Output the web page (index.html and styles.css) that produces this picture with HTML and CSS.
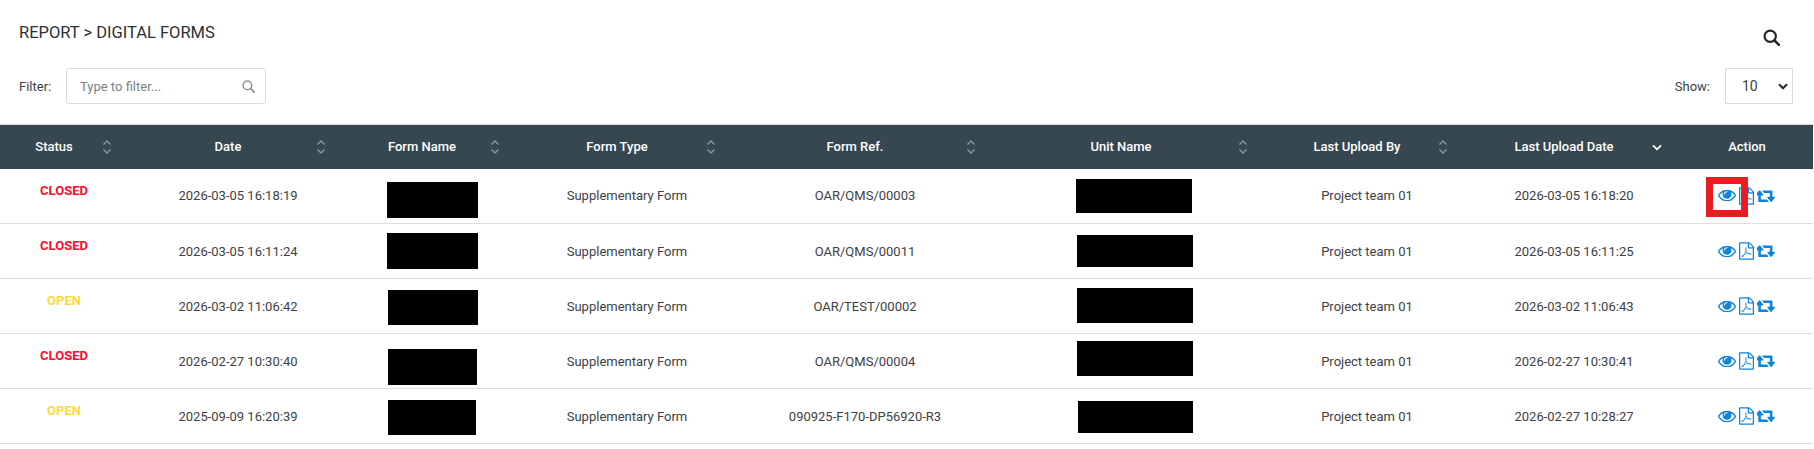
FILE: index.html
```html
<!DOCTYPE html>
<html lang="en">
<head>
<meta charset="utf-8">
<title>Digital Forms</title>
<link rel="stylesheet" href="styles.css">
</head>
<body>
<svg class="defs" aria-hidden="true">
  <defs>
    <symbol id="i-sort" viewBox="0 0 10 16"><path d="M1.500 5.500 5 2l3.500 3.500M1.500 10.500 5 14l3.500-3.500" fill="none" stroke="currentColor" stroke-width="1.400"/></symbol>
    <symbol id="i-eye" viewBox="0 448 1792 1024"><path fill="currentColor" d="M1664 960q-152-236-381-353 61 104 61 225 0 185-131.500 316.500t-316.500 131.500-316.500-131.500-131.500-316.500q0-121 61-225-229 117-381 353 133 205 333.500 326.500t434.500 121.500 434.500-121.500 333.500-326.500zm-720-384q0-20-14-34t-34-14q-125 0-214.500 89.500t-89.500 214.500q0 20 14 34t34 14 34-14 14-34q0-86 61-147t147-61q20 0 34-14t14-34zm848 384q0 34-20 69-140 230-376.500 368.500t-499.500 138.500-499.500-139-376.500-368q-20-35-20-69t20-69q140-229 376.500-368t499.500-139 499.500 139 376.500 368q20 35 20 69z"/></symbol>
    <symbol id="i-pdf" viewBox="128 0 1536 1792"><path fill="currentColor" d="M1596 380q28 28 48 76t20 88v1152q0 40-28 68t-68 28h-1344q-40 0-68-28t-28-68v-1600q0-40 28-68t68-28h896q40 0 88 20t76 48zm-444-244v376h376q-10-29-22-41l-313-313q-12-12-41-22zm384 1528v-1024h-416q-40 0-68-28t-28-68v-416h-768v1536h1280zm-514-593q33 26 84 56 59-7 117-7 147 0 177 49 16 22 2 52 0 1-1 2l-2 2v1q-6 38-71 38-48 0-115-20t-130-53q-221 24-392 83-153 262-242 262-15 0-28-7l-24-12q-1-1-6-5-10-10-6-36 9-40 56-91.500t132-96.500q14-9 23 6 2 2 2 4 52-85 107-197 68-136 104-262-24-82-30.500-159.500t6.500-127.500q11-40 42-40h22q23 0 35 15 18 21 9 68-2 6-4 8 1 3 1 8v30q-2 123-14 192 55 164 146 238zm-576 411q52-24 137-158-51 40-87.500 84t-49.500 74zm398-920q-15 42-2 132 1-7 7-44 0-3 7-43 1-4 4-8-1-1-1-2-1-2-1-3-1-22-13-36 0 1-1 2v2zm-124 661q135-54 284-81-2-1-13-9.500t-16-13.500q-76-67-127-176-27 86-83 197-30 56-45 83zm646-16q-24-24-140-24 76 28 124 28 14 0 18-1 0-1-2-3z"/></symbol>
    <symbol id="i-retweet" viewBox="64 304 1792 1184"><path fill="currentColor" d="M1216 1456q0 13-9.500 22.500t-22.500 9.500h-960q-8 0-13.500-2t-9-7-5.500-8-3-11.500-1-11.500v-600h-192q-26 0-45-19t-19-45q0-24 15-41l320-384q19-22 49-22t49 22l320 384q15 17 15 41 0 26-19 45t-45 19h-192v384h576q16 0 25 11l160 192q7 10 7 21zm640-416q0 24-15 41l-320 384q-20 23-49 23t-49-23l-320-384q-15-17-15-41 0-26 19-45t45-19h192v-384h-576q-16 0-25-12l-160-192q-7-9-7-20 0-13 9.500-22.500t22.500-9.500h960q8 0 13.500 2t9 7 5.500 8 3 11.500 1 11.500v600h192q26 0 45 19t19 45z"/></symbol>
  </defs>
</svg>

<header class="title-bar">
  <h1 class="title">REPORT &gt; DIGITAL FORMS</h1>
  <svg class="search-main" viewBox="0 0 16 16" aria-hidden="true"><circle cx="6.800" cy="6.800" r="5.300" fill="none" stroke="currentColor" stroke-width="2"/><path d="m10.700 10.700 4.300 4.300" stroke="currentColor" stroke-width="2.400" stroke-linecap="round"/></svg>
</header>

<div class="controls">
  <label class="filter-label">Filter:</label>
  <div class="filter-box">
    <span class="placeholder">Type to filter...</span>
    <svg class="search-small" viewBox="0 0 13 13" aria-hidden="true"><circle cx="5.400" cy="5.400" r="4.300" fill="none" stroke="currentColor" stroke-width="1.500"/><path d="m8.600 8.600 3.600 3.600" stroke="currentColor" stroke-width="1.800" stroke-linecap="round"/></svg>
  </div>
  <span class="show-label">Show:</span>
  <div class="show-select">
    <span>10</span>
    <svg class="chevron" viewBox="0 0 10 7" aria-hidden="true"><path d="M1 1.300 5 5.300l4-4" fill="none" stroke="currentColor" stroke-width="2"/></svg>
  </div>
</div>

<table class="grid">
  <colgroup>
    <col class="c1"><col class="c2"><col class="c3"><col class="c4"><col class="c5"><col class="c6"><col class="c7"><col class="c8"><col class="c9">
  </colgroup>
  <thead>
    <tr>
      <th>Status<svg class="sort s1"><use href="#i-sort"/></svg></th>
      <th>Date<svg class="sort s2"><use href="#i-sort"/></svg></th>
      <th>Form Name<svg class="sort s1"><use href="#i-sort"/></svg></th>
      <th>Form Type<svg class="sort s2"><use href="#i-sort"/></svg></th>
      <th>Form Ref.<svg class="sort s1"><use href="#i-sort"/></svg></th>
      <th>Unit Name<svg class="sort s2"><use href="#i-sort"/></svg></th>
      <th>Last Upload By<svg class="sort s1"><use href="#i-sort"/></svg></th>
      <th>Last Upload Date<svg class="sort-active" viewBox="0 0 10 7"><path d="M1 1.300 5 5.300l4-4" fill="none" stroke="currentColor" stroke-width="1.800"/></svg></th>
      <th class="no-sort">Action</th>
    </tr>
  </thead>
  <tbody>
    <tr>
      <td><span class="status closed">CLOSED</span></td><td>2026-03-05 16:18:19</td><td></td><td>Supplementary Form</td><td>OAR/QMS/00003</td><td></td><td>Project team 01</td><td>2026-03-05 16:18:20</td>
      <td class="action-cell"><div class="actions"><svg class="eye"><use href="#i-eye"/></svg><svg class="pdf"><use href="#i-pdf"/></svg><svg class="retweet"><use href="#i-retweet"/></svg></div></td>
    </tr>
    <tr>
      <td><span class="status closed">CLOSED</span></td><td>2026-03-05 16:11:24</td><td></td><td>Supplementary Form</td><td>OAR/QMS/00011</td><td></td><td>Project team 01</td><td>2026-03-05 16:11:25</td>
      <td class="action-cell"><div class="actions"><svg class="eye"><use href="#i-eye"/></svg><svg class="pdf"><use href="#i-pdf"/></svg><svg class="retweet"><use href="#i-retweet"/></svg></div></td>
    </tr>
    <tr>
      <td><span class="status open">OPEN</span></td><td>2026-03-02 11:06:42</td><td></td><td>Supplementary Form</td><td>OAR/TEST/00002</td><td></td><td>Project team 01</td><td>2026-03-02 11:06:43</td>
      <td class="action-cell"><div class="actions"><svg class="eye"><use href="#i-eye"/></svg><svg class="pdf"><use href="#i-pdf"/></svg><svg class="retweet"><use href="#i-retweet"/></svg></div></td>
    </tr>
    <tr>
      <td><span class="status closed">CLOSED</span></td><td>2026-02-27 10:30:40</td><td></td><td>Supplementary Form</td><td>OAR/QMS/00004</td><td></td><td>Project team 01</td><td>2026-02-27 10:30:41</td>
      <td class="action-cell"><div class="actions"><svg class="eye"><use href="#i-eye"/></svg><svg class="pdf"><use href="#i-pdf"/></svg><svg class="retweet"><use href="#i-retweet"/></svg></div></td>
    </tr>
    <tr>
      <td><span class="status open">OPEN</span></td><td>2025-09-09 16:20:39</td><td></td><td>Supplementary Form</td><td>090925-F170-DP56920-R3</td><td></td><td>Project team 01</td><td>2026-02-27 10:28:27</td>
      <td class="action-cell"><div class="actions"><svg class="eye"><use href="#i-eye"/></svg><svg class="pdf"><use href="#i-pdf"/></svg><svg class="retweet"><use href="#i-retweet"/></svg></div></td>
    </tr>
  </tbody>
</table>

<div class="redact fn1"></div><div class="redact fn2"></div><div class="redact fn3"></div><div class="redact fn4"></div><div class="redact fn5"></div>
<div class="redact un1"></div><div class="redact un2"></div><div class="redact un3"></div><div class="redact un4"></div><div class="redact un5"></div>
<div class="highlight"></div>
</body>
</html>
```
FILE: styles.css
```css
* { box-sizing: border-box; }
html, body { margin: 0; padding: 0; background: #fff; }
body {
  width: 1814px;
  height: 449px;
  overflow: hidden;
  position: relative;
  font-family: Roboto, "Liberation Sans", sans-serif;
  font-size: 13px;
  color: #3d4145;
}
.defs { position: absolute; width: 0; height: 0; }

.title-bar {
  display: flex;
  justify-content: space-between;
  height: 68px;
  padding: 23px 34px 0 19px;
}
.title {
  margin: 0;
  font-size: 16.500px;
  line-height: 20px;
  font-weight: 400;
  color: #2b3036;
}
.search-main { width: 17px; height: 17px; margin-top: 6px; color: #20262b; }

.controls {
  display: flex;
  align-items: center;
  height: 36px;
  padding: 0 21px 0 19px;
}
.filter-label { width: 47px; }
.filter-box {
  display: flex;
  align-items: center;
  justify-content: space-between;
  width: 200px;
  height: 36px;
  padding: 0 10px 0 13px;
  border: 1px solid #dcdcdc;
  border-radius: 3px;
}
.placeholder { color: #7a7f84; }
.search-small { width: 13px; height: 13px; color: #8f9396; }
.show-label { margin-left: auto; margin-right: 15px; }
.show-select {
  display: flex;
  align-items: center;
  justify-content: space-between;
  width: 68px;
  height: 36px;
  padding: 0 4px 0 16px;
  border: 1px solid #dcdcdc;
  font-size: 14px;
}
.chevron { width: 10px; height: 7px; color: #23282c; }

.grid {
  margin-top: 20px;
  width: 1813px;
  table-layout: fixed;
  border-collapse: collapse;
  border-top: 1px solid #dcdcdc;
}
.c1 { width: 128px; }
.c2 { width: 220px; }
.c3 { width: 168px; }
.c4 { width: 222px; }
.c5 { width: 254px; }
.c6 { width: 278px; }
.c7 { width: 194px; }
.c8 { width: 220px; }
.c9 { width: 129px; }

th {
  position: relative;
  height: 44px;
  padding: 0 20px 1px 0;
  background: #36474f;
  color: #fff;
  font-size: 13px;
  font-weight: 500;
  text-align: center;
}
th.no-sort { padding-right: 3px; }
.sort { position: absolute; top: 14px; width: 10px; height: 16px; color: #8d9aa0; }
.s1 { right: 16px; }
.s2 { right: 22px; }
.sort-active { position: absolute; top: 19px; right: 22px; width: 10px; height: 7px; color: #fff; }

td {
  height: 55px;
  padding: 0;
  border-bottom: 1px solid #dedede;
  text-align: center;
  vertical-align: middle;
}
td.action-cell { padding-right: 4px; }
.status { display: block; margin-top: -11px; font-size: 13px; font-weight: 700; }
.closed { color: #ff0a2b; }
.open { color: #ffd83b; }

.actions {
  display: flex;
  justify-content: center;
  align-items: center;
  gap: 3px;
  color: #0d84dd;
}
.eye { width: 18px; height: 11px; }
.pdf { width: 15px; height: 18px; }
.retweet { width: 18px; height: 12px; }

.redact { position: absolute; background: #000; }
.fn1 { left: 387px; top: 182px; width: 91px; height: 36px; }
.fn2 { left: 387px; top: 233px; width: 91px; height: 36px; }
.fn3 { left: 388px; top: 290px; width: 90px; height: 35px; }
.fn4 { left: 388px; top: 349px; width: 89px; height: 36px; }
.fn5 { left: 388px; top: 400px; width: 88px; height: 35px; }
.un1 { left: 1076px; top: 179px; width: 116px; height: 34px; }
.un2 { left: 1077px; top: 235px; width: 116px; height: 32px; }
.un3 { left: 1077px; top: 288px; width: 116px; height: 35px; }
.un4 { left: 1077px; top: 341px; width: 116px; height: 35px; }
.un5 { left: 1078px; top: 401px; width: 115px; height: 32px; }
.highlight {
  position: absolute;
  left: 1706px;
  top: 177px;
  width: 42px;
  height: 40px;
  border: 7px solid #e91c21;
}
```
